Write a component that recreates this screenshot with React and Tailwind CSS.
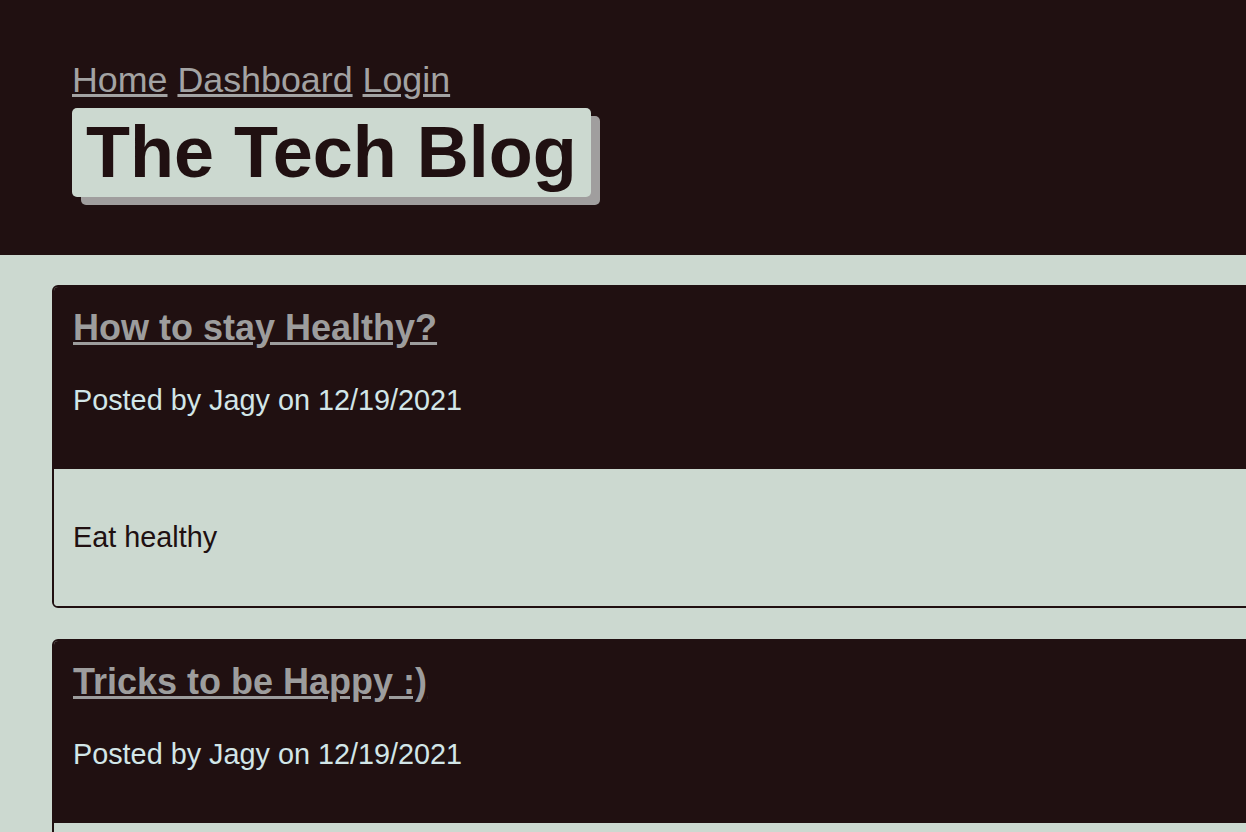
export default function App() {
  const posts = [
    { title: "How to stay Healthy?", body: "Eat healthy" },
    { title: "Tricks to be Happy :)", body: "" },
  ];
  return (
    <div className="min-h-screen w-full overflow-hidden bg-[#ccd9d0]" style={{ fontFamily: '"Liberation Sans", Arial, sans-serif' }}>
      <header className="bg-[#201011] pl-[72px] pt-[60px] pb-[58px]">
        <nav className="text-[35.8px] leading-[1.15] text-[#a3a3a3]">
          <a href="#" className="underline">Home</a>{" "}
          <a href="#" className="underline">Dashboard</a>{" "}
          <a href="#" className="underline">Login</a>
        </nav>
        <div className="mt-[7px] flex">
          <h1 className="rounded-[5px] bg-[#ccd9d0] px-[14px] py-[3px] text-[72px] font-bold leading-[1.15] text-[#201011] shadow-[9px_8px_0_#a09e9e]">
            The Tech Blog
          </h1>
        </div>
      </header>
      <main className="pl-[52px] pt-[30px] flex flex-col gap-[31px]">
        {posts.map((p, i) => (
          <article key={i} className="w-[1300px] shrink-0 overflow-hidden rounded-[6px] border-2 border-[#201011]">
            <div className="bg-[#201011] pl-[19px] pt-[20px] pb-[52px]">
              <h2 className="text-[36px] font-bold leading-[1.15] text-[#9d9d9d]">
                <a href="#" className="underline">{p.title}</a>
              </h2>
              <p className="mt-[36px] text-[28.8px] leading-[1.15] text-[#d2e6e8]">Posted by Jagy on 12/19/2021</p>
            </div>
            <div className="bg-[#ccd9d0] pl-[19px] pt-[52px] pb-[51px]">
              <p className="text-[28.8px] leading-[1.15] text-[#201011]">{p.body}</p>
            </div>
          </article>
        ))}
      </main>
    </div>
  );
}
